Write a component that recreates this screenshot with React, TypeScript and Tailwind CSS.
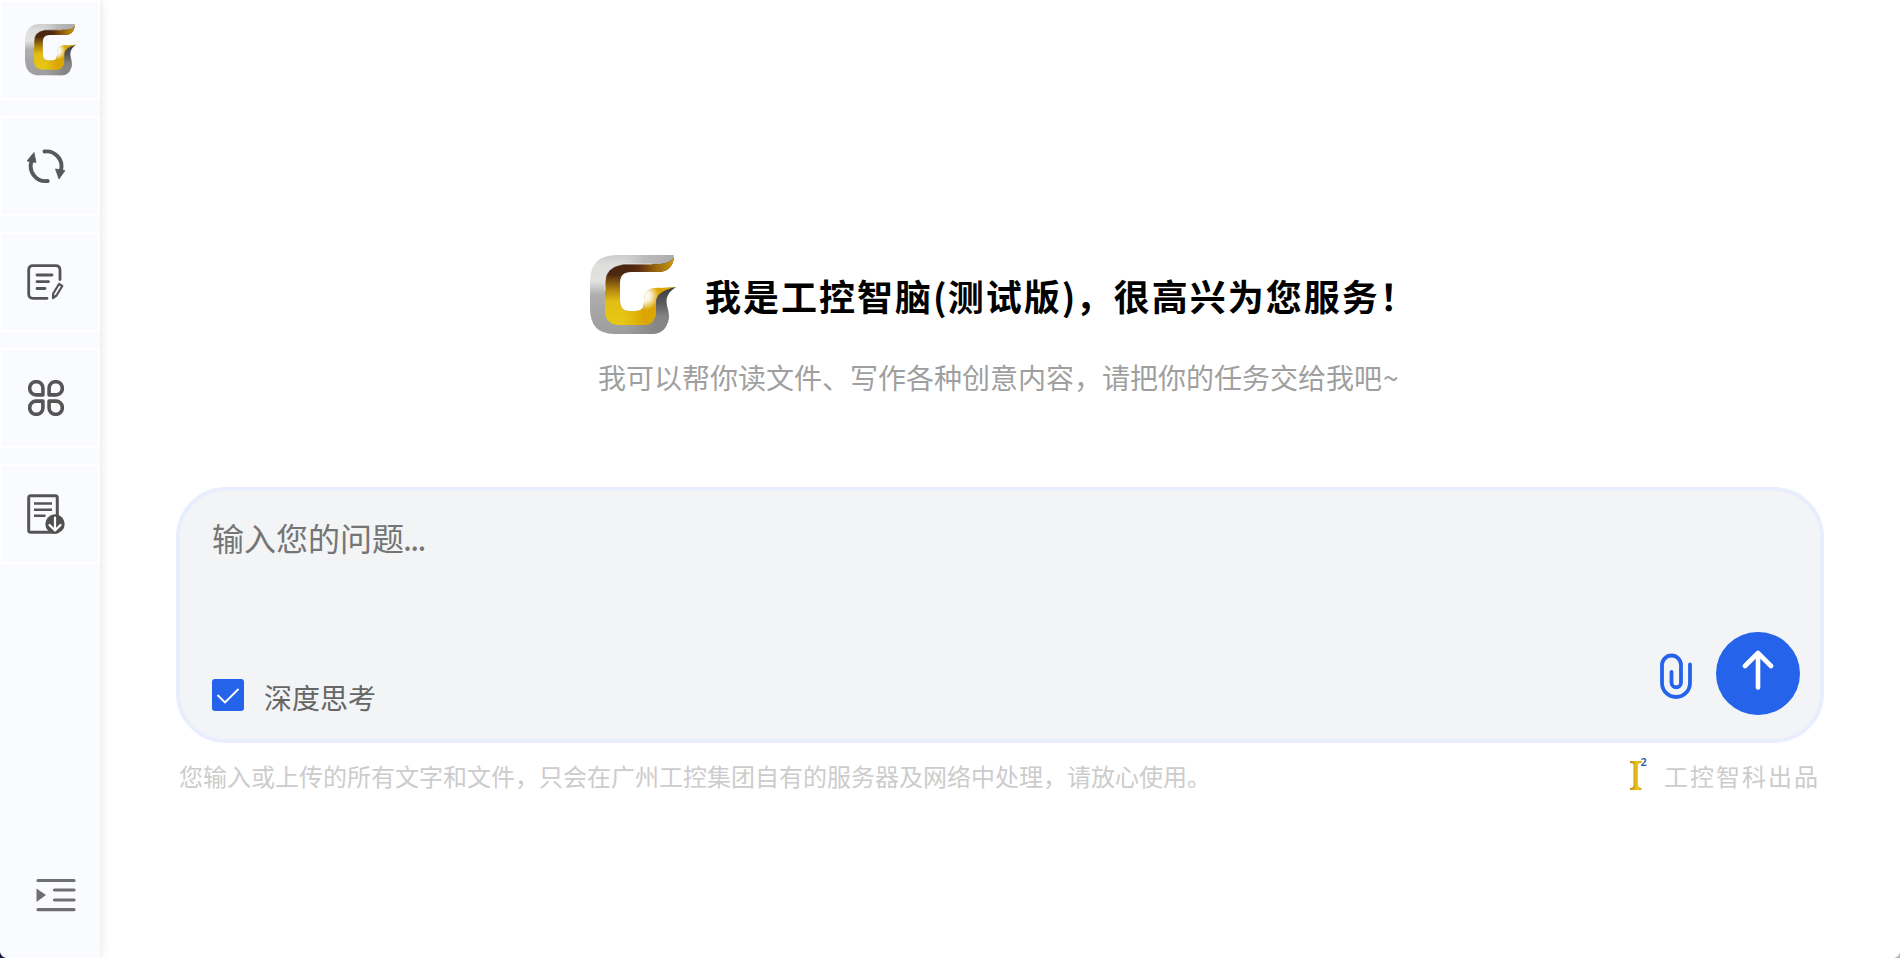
import React from "react";

const FONT = "font-['Noto_Sans_CJK_SC',sans-serif]";

function Logo({ id, className }: { id: string; className: string }) {
  return (
    <svg viewBox="0 0 86 80" className={className} preserveAspectRatio="none">
      <defs>
        <linearGradient id={id + "s"} x1="0" y1="0" x2="0" y2="1">
          <stop offset="0" stopColor="#cacaca" />
          <stop offset=".12" stopColor="#dededd" />
          <stop offset=".33" stopColor="#e2e2e1" />
          <stop offset=".5" stopColor="#b0afaf" />
          <stop offset=".75" stopColor="#a5a4a4" />
          <stop offset="1" stopColor="#9e9d9d" />
        </linearGradient>
        <linearGradient id={id + "t"} gradientUnits="userSpaceOnUse" x1="22" y1="0" x2="84" y2="0">
          <stop offset="0" stopColor="#e0e0df" stopOpacity="0" />
          <stop offset=".5" stopColor="#bcbcbc" />
          <stop offset="1" stopColor="#acacac" />
        </linearGradient>
        <linearGradient id={id + "b"} gradientUnits="userSpaceOnUse" x1="36" y1="0" x2="66" y2="0">
          <stop offset="0" stopColor="#868686" stopOpacity="0" />
          <stop offset="1" stopColor="#868686" />
        </linearGradient>
        <linearGradient id={id + "d"} gradientUnits="userSpaceOnUse" x1="0" y1="32" x2="0" y2="68">
          <stop offset="0" stopColor="#3e3e40" />
          <stop offset=".45" stopColor="#5a5a5c" />
          <stop offset=".8" stopColor="#828282" />
          <stop offset="1" stopColor="#868686" />
        </linearGradient>
        <linearGradient id={id + "g"} x1="0" y1="0" x2="0" y2="1">
          <stop offset="0" stopColor="#43200f" />
          <stop offset=".26" stopColor="#4f2811" />
          <stop offset=".5" stopColor="#b98d0e" />
          <stop offset=".65" stopColor="#e3bd14" />
          <stop offset="1" stopColor="#e8c812" />
        </linearGradient>
        <linearGradient id={id + "h"} gradientUnits="userSpaceOnUse" x1="34" y1="0" x2="84" y2="0">
          <stop offset="0" stopColor="#4a230f" stopOpacity="0" />
          <stop offset=".3" stopColor="#5b3010" />
          <stop offset=".65" stopColor="#9a6810" />
          <stop offset="1" stopColor="#cd9a08" />
        </linearGradient>
        <linearGradient id={id + "f"} gradientUnits="userSpaceOnUse" x1="34" y1="0" x2="54" y2="0">
          <stop offset="0" stopColor="#dca602" stopOpacity="0" />
          <stop offset="1" stopColor="#dca602" />
        </linearGradient>
        <radialGradient id={id + "w"} gradientUnits="userSpaceOnUse" cx="55" cy="41" r="14">
          <stop offset="0" stopColor="#fff" />
          <stop offset=".4" stopColor="#fff" stopOpacity=".85" />
          <stop offset="1" stopColor="#fff" stopOpacity="0" />
        </radialGradient>
      </defs>
      <path
        d="M27 0H84C83 9 78 16 68 17H41Q30 17 30 28V46Q30 56 40 56H46Q54 56 54 48V45C54 36 61 32 72 33L86 32C78 37 75 43 77 51C79 57 79 62 78 66Q75 79 61 79H24Q0 79 0 53V27Q0 0 27 0Z"
        fill={`url(#${id}s)`}
      />
      <path d="M20 0H84L80 9H24Z" fill={`url(#${id}t)`} />
      <path d="M36 60H79Q79 63 78 66Q75 79 61 79H36Z" fill={`url(#${id}b)`} />
      <path d="M86 32C78 37 75 43 77 51C79 57 79 62 78 68H64V45Q66 35 86 32Z" fill={`url(#${id}d)`} />
      <path
        d="M33 9L70 9Q80 9 84 2C83 11 78 17 68 17H41Q30 17 30 28V46Q30 56 40 56H46Q54 56 54 48V45C54 40 58 36 66 36V58Q64 70 54 70H27Q15 68 15 56V27Q15 12 33 9Z"
        fill={`url(#${id}g)`}
      />
      <path d="M34 9L70 9Q80 9 84 2C83 11 78 17 68 17H34Z" fill={`url(#${id}h)`} />
      <path d="M54 45C54 36 61 32 70 33L86 32Q67 36 66 46V58Q64 70 54 70H34V56H46Q54 56 54 48Z" fill={`url(#${id}f)`} />
      <path d="M54 45C54 36 61 32 70 33L74 34Q67 38 66 46V58H52Q54 54 54 48Z" fill={`url(#${id}w)`} />
      <path d="M15 36V27Q15 12 33 9H62" fill="none" stroke="#f1f1f1" strokeWidth=".8" />
    </svg>
  );
}

function RefreshIcon() {
  return (
    <svg viewBox="0 0 38 36" className="h-9 w-[38px]">
      <g fill="none" stroke="#575959" strokeWidth="3.9" strokeLinecap="round">
        <path d="M17.5 3.5A15 15 0 0 1 34 22" />
        <path d="M20.7 33A15 15 0 0 1 4.3 14" />
      </g>
      <path d="M28.500 21L38 22.500L32 31ZM0 13L7 4.500L9 14.500Z" fill="#575959" stroke="#575959" strokeWidth=".8" strokeLinejoin="round" />
    </svg>
  );
}

function NoteIcon() {
  return (
    <svg viewBox="0 0 37 36" className="h-9 w-[37px]" fill="none" stroke="#555" strokeWidth="2.800" strokeLinecap="round" strokeLinejoin="round">
      <path d="M33 15.500V6Q33 1.700 28.700 1.700H6Q1.700 1.700 1.700 6V30Q1.700 34.300 6 34.300H20" />
      <path d="M10 11H25M10 17.700H21.500M10 24.500H18" />
      <path d="M32 20L35.300 22L29.500 31.500L26 34L26.200 29.500Z" strokeWidth="2.200" />
    </svg>
  );
}

const PETAL = "M14.900 14.900H8A6.300 6.300 0 0 1 1.700 8.600V8A6.300 6.300 0 0 1 8 1.700H8.600A6.300 6.300 0 0 1 14.900 8Z";

function AppsIcon() {
  return (
    <svg viewBox="0 0 36 36" className="size-9" fill="none" stroke="#555" strokeWidth="3.600" strokeLinejoin="round">
      <path d={PETAL} />
      <path d={PETAL} transform="matrix(-1 0 0 1 36 0)" />
      <path d={PETAL} transform="matrix(1 0 0 -1 0 36)" />
      <path d={PETAL} transform="matrix(-1 0 0 -1 36 36)" />
    </svg>
  );
}

function DownloadIcon() {
  return (
    <svg viewBox="0 0 38 40" className="h-10 w-[38px]" fill="none" strokeLinecap="round" strokeLinejoin="round">
      <rect x="1.700" y="1.700" width="28.600" height="36.500" rx="2" stroke="#555" strokeWidth="3" />
      <path d="M7 9.500H25M7 15.700H25M7 21.700H18.500" stroke="#555" strokeWidth="2.400" strokeLinecap="butt" />
      <circle cx="28" cy="30" r="9.700" fill="#505050" />
      <path d="M28 23.500V36M22.500 31L28 36.500L33.500 31" stroke="#fff" strokeWidth="2.200" />
    </svg>
  );
}

function ExpandIcon() {
  return (
    <svg viewBox="0 0 40 34" className="h-[34px] w-10">
      <path d="M2 2.500H38M18.500 12H38M18.500 22H38M2 31.700H38" stroke="#6f6f6f" strokeWidth="3.200" strokeLinecap="round" />
      <path d="M.5 10.500V24L10 17Z" fill="#6f6f6f" />
    </svg>
  );
}

function PaperclipIcon() {
  return (
    <svg viewBox="0 0 32 46" className="h-[46px] w-8" fill="none" stroke="#2563eb" strokeWidth="3.800" strokeLinecap="round">
      <path d="M11.500 19V29.500A4.700 4.700 0 0 0 21 29.500V12A9.500 9.500 0 0 0 2 12V30A14 14 0 0 0 30 30V11.500" />
    </svg>
  );
}

function SquaredMark() {
  return (
    <svg viewBox="0 -4 18 36" className="-mt-1 h-9 w-[18px]">
      <defs>
        <linearGradient id="mark" x1="0" y1="0" x2="1" y2="0">
          <stop offset="0" stopColor="#b8901c" />
          <stop offset=".4" stopColor="#dcae14" />
          <stop offset=".65" stopColor="#ecc814" />
          <stop offset="1" stopColor="#d0a81a" />
        </linearGradient>
      </defs>
      <path d="M0 3H11.500V5Q8 5 8 7V27Q8 29.500 11.500 30V32H0V30Q3.500 29.500 3.500 27V7Q3.500 5 0 5Z" fill="url(#mark)" />
      <text x="10.500" y="8" fontSize="11" fontWeight="600" fill="#3159a8" fontFamily="Noto Sans">2</text>
    </svg>
  );
}

function NavItem({ children }: { children: React.ReactNode }) {
  return <button className="flex h-[100px] w-full shrink-0 items-start border-2 border-white">{children}</button>;
}

export default function App() {
  return (
    <div className={`relative flex h-[958px] w-full overflow-hidden bg-white ${FONT}`}>
      <aside className="z-10 flex w-[100px] shrink-0 flex-col gap-4 bg-[#fafbff] shadow-[0_0_10px_rgba(0,0,0,0.12)]">
        <NavItem>
          <span className="pt-[22px] pl-[23px]"><Logo id="a" className="h-[52px] w-[51px]" /></span>
        </NavItem>
        <NavItem>
          <span className="pt-[30px] pl-[25px]"><RefreshIcon /></span>
        </NavItem>
        <NavItem>
          <span className="pt-[30px] pl-[25px]"><NoteIcon /></span>
        </NavItem>
        <NavItem>
          <span className="pt-[30px] pl-[26px]"><AppsIcon /></span>
        </NavItem>
        <NavItem>
          <span className="pt-[28px] pl-[25px]"><DownloadIcon /></span>
        </NavItem>
        <button className="mt-auto mb-[46px] pl-9"><ExpandIcon /></button>
      </aside>

      <main className="flex flex-1 flex-col pr-[76px] pl-[76px]">
        <header className="flex h-[487px] flex-col pt-[255px]">
          <div className="flex h-[81px] items-start pl-[414px]">
            <Logo id="b" className="h-20 w-[86px]" />
            <h1 className="ml-[29px] pt-[14px] text-[36px] leading-[52px] font-bold tracking-[2px] whitespace-nowrap text-black">
              我是工控智脑<span className="tracking-[1px]">(</span>测试版<span className="tracking-[0.5px]">)</span>，很高兴为您服务！
            </h1>
          </div>
          <p className="mt-5 pl-[422px] text-[28px] leading-[42px] whitespace-nowrap text-[#9f9f9f]">
            我可以帮你读文件、写作各种创意内容，请把你的任务交给我吧<span className="ml-px">~</span>
          </p>
        </header>

        <section className="flex h-64 flex-col justify-between rounded-[50px] border-4 border-[#e8eefd] bg-[#f2f4f6] pl-8">
          <div className="pt-[22px] text-[32px] leading-[48px] text-[#757575]">
            输入您的问题<span className="-ml-px tracking-[-1.6px]">...</span>
          </div>
          <div className="flex h-[108px] items-start pr-5">
            <label className="flex items-start pt-[44px]">
              <span className="mt-[4px] flex size-8 items-center justify-center rounded-[3px] bg-[#2563eb]">
                <svg viewBox="0 0 32 32" className="size-8" fill="none" stroke="#fff" strokeWidth="1.900">
                  <path d="M5.500 16L13 23.500L26.500 10" />
                </svg>
              </span>
              <span className="ml-5 pt-px text-[28px] leading-[42px] text-[#666]">深度思考</span>
            </label>
            <button className="mt-[22px] ml-auto"><PaperclipIcon /></button>
            <button className="mt-px ml-6 flex h-[83px] w-[84px] items-start justify-center rounded-full bg-[#2563eb] pt-[17px]">
              <svg viewBox="0 0 32 42" className="h-[42px] w-8" fill="none" stroke="#fff" strokeWidth="4.600" strokeLinecap="round" strokeLinejoin="round">
                <path d="M16 4V38.500M3 17L16 4L29 17" />
              </svg>
            </button>
          </div>
        </section>

        <footer className="flex h-[66px] items-start pt-[15px] pr-1 pl-[3px] text-[24px] leading-9 whitespace-nowrap text-[#ccc]">
          <span>您输入或上传的所有文字和文件，只会在广州工控集团自有的服务器及网络中处理，请放心使用。</span>
          <span className="ml-auto flex items-start">
            <SquaredMark />
            <span className="ml-4 tracking-[2px]">工控智科出品</span>
          </span>
        </footer>
      </main>
      <svg viewBox="0 0 6 6" className="absolute bottom-0 left-0 z-20 size-1.5">
        <path d="M0 0Q1 5 6 6H0Z" fill="#10183a" />
      </svg>
      <svg viewBox="0 0 6 6" className="absolute right-0 bottom-0 z-20 size-1.5">
        <path d="M6 0Q5 5 0 6H6Z" fill="#b5b5b5" />
      </svg>
    </div>
  );
}
